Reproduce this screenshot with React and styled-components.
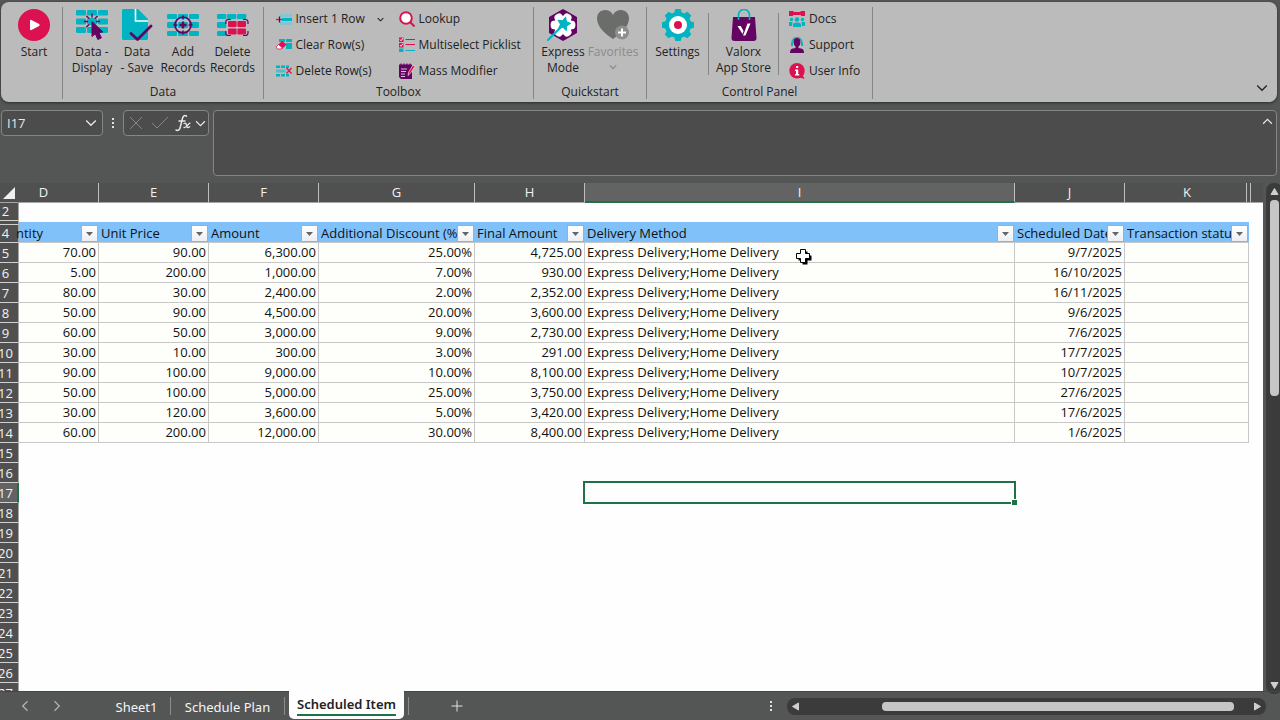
import React from "react";
import styled, { createGlobalStyle } from "styled-components";

const TEAL = "#00b4c3";
const RED = "#dc1150";
const PURPLE = "#640462";
const GREEN = "#1f7246";
const ui = `"Noto Sans", "Open Sans", sans-serif`;
const ribbonFont = `"Open Sans", "Noto Sans", sans-serif`;
const cellFont = `"Open Sans", "Noto Sans", sans-serif`;

const Global = createGlobalStyle`
  *, *::before, *::after { box-sizing: border-box; }
  body { margin: 0; background: #545656; font-family: ${ui}; }
  button, input, textarea { font: inherit; color: inherit; margin: 0; }
  button { border: 0; padding: 0; background: none; }
  svg { display: block; flex: none; }
`;

const Page = styled.div`
  display: flex;
  flex-direction: column;
  height: 100vh;
  overflow: hidden;
  padding-top: 2px;
  background: #545656;
`;

/* Ribbon */
const Ribbon = styled.header`
  display: flex;
  flex: none;
  position: relative;
  height: 100px;
  margin: 0 3px 0 1px;
  padding: 5px 0 3px;
  border-radius: 8px;
  background: #bbbbbb;
  box-shadow: 0 1px 3px #2c2c2c;
  color: #222222;
  font-family: ${ribbonFont};
  font-size: 12px;
  line-height: 16px;
`;
const Group = styled.section`
  display: flex;
  flex-direction: column;
  justify-content: space-between;
  width: ${(p) => p.$w}px;
  padding-left: ${(p) => p.$pad || 0}px;
  border-right: 1px solid #858585;
`;
const Tools = styled.div`
  display: flex;
  justify-content: ${(p) => (p.$start ? "flex-start" : "center")};
  height: 72px;
`;
const GroupName = styled.div`
  text-align: center;
  line-height: 14px;
`;
const BigButton = styled.button`
  display: flex;
  flex-direction: column;
  align-items: center;
  gap: 3px;
  width: ${(p) => p.$w}px;
  padding-top: 2px;
  white-space: nowrap;
  color: ${(p) => (p.$dim ? "#8c8c8c" : "inherit")};
`;
const Split = styled.div`
  width: 1px;
  height: 62px;
  margin-top: 6px;
  background: #858585;
`;
const SmallColumn = styled.div`
  display: flex;
  flex: none;
  flex-direction: column;
  width: ${(p) => p.$w}px;
  height: 78px;
  padding-left: ${(p) => p.$pad || 0}px;
  margin-top: -1px;
`;
const SmallButton = styled.button`
  display: flex;
  flex: none;
  align-items: center;
  gap: 4px;
  height: 26px;
  white-space: nowrap;
`;
const RowPair = styled.div`
  display: flex;
  align-items: center;
  justify-content: space-between;
  padding-right: 15px;
`;
const Collapse = styled.button`
  position: absolute;
  right: 9px;
  bottom: 8px;
`;

/* Formula bar */
const FormulaBar = styled.div`
  display: flex;
  flex: none;
  align-items: flex-start;
  height: 81px;
  padding: 8px 3px 0 1px;
  color: #e8e8e8;
`;
const Field = styled.div`
  display: flex;
  align-items: center;
  justify-content: space-between;
  width: ${(p) => p.$w}px;
  height: 26px;
  padding: 0 ${(p) => p.$pad}px;
  border: 1px solid #858585;
  border-radius: 4px;
  background: #4c4c4c;
`;
const NameInput = styled.input`
  width: 60px;
  padding: 0;
  border: 0;
  background: none;
  font-family: ${cellFont};
  font-size: 13px;
  outline: 0;
`;
const DotsBox = styled.div`
  display: grid;
  place-items: center;
  width: 20px;
  height: 26px;
`;
const FormulaBox = styled.div`
  display: flex;
  flex: 1;
  height: 66px;
  margin-left: 4px;
  padding: 5px 3px 0 8px;
  border: 1px solid #858585;
  border-radius: 4px;
  background: #4c4c4c;
`;
const FormulaInput = styled.textarea`
  flex: 1;
  height: 54px;
  border: 0;
  padding: 0;
  resize: none;
  background: none;
  outline: 0;
  font-size: 13px;
`;
const ChevronButton = styled.button`
  align-self: flex-start;
`;

/* Sheet */
const Body = styled.main`
  display: flex;
  flex: 1;
  min-height: 0;
`;
const Sheet = styled.div`
  position: relative;
  flex: 1;
  min-width: 0;
  overflow: hidden;
  background: #fefefe;
`;
const Grid = styled.table`
  width: 100%;
  table-layout: fixed;
  border-collapse: separate;
  border-spacing: 0;
  font-family: ${cellFont};
  font-size: 13px;
  line-height: 19px;
  color: #111111;
`;
const ColHead = styled.th`
  height: 20px;
  padding: 0;
  border-right: ${(p) => (p.$last ? "0" : "1px solid #bdbdbd")};
  border-bottom: ${(p) => (p.$on ? `2px solid ${GREEN}` : "1px solid #a6a6a6")};
  background: ${(p) => (p.$on ? "#636363" : "#505050")};
  color: #f2f2f2;
  font-size: 13px;
  font-weight: 400;
  line-height: 18px;
  vertical-align: top;
`;
const Corner = styled(ColHead)`
  border-right-color: #505050;
`;
const ScrolledLabel = styled.div`
  margin-left: -30px;
`;
const HiddenMark = styled.div`
  width: 5px;
  height: 19px;
  margin-left: -3px;
  border: solid #bdbdbd;
  border-width: 0 1px;
  background: #505050;
`;
const RowHead = styled.th`
  height: ${(p) => p.$h}px;
  padding: 0;
  overflow: hidden;
  border-right: ${(p) => (p.$on ? `2px solid ${GREEN}` : "1px solid #a6a6a6")};
  border-bottom: 1px solid #d0d0d0;
  background: ${(p) => (p.$on ? "#636363" : "#505050")};
  color: #f2f2f2;
  font-size: 13px;
  font-weight: 400;
  line-height: 17px;
  vertical-align: bottom;
`;
const RowNumber = styled.div`
  display: flex;
  justify-content: center;
  width: 27px;
  margin-left: -8px;
`;
const Cell = styled.td`
  position: relative;
  padding: 0 2px;
  white-space: nowrap;
  text-align: ${(p) => (p.$left ? "left" : "right")};
  border: solid #c8c8c8;
  border-width: ${(p) => (p.$line ? "0 1px 1px 0" : "0")};
  background: ${(p) => (p.$line ? "#fefffb" : "transparent")};
`;
const Band = styled.td`
  padding: 0;
  border-top: 1px solid #fefefe;
  background: #80c1fa;
`;
const HeadCell = styled.td`
  padding: 0;
  border-bottom: 1px solid #c8c8c8;
  background: #80c1fa;
`;
const HeadInner = styled.div`
  display: flex;
  align-items: center;
  height: 17px;
  padding: 0 1px 0 2px;
`;
const HeadText = styled.div`
  flex: 1;
  min-width: 0;
  overflow: hidden;
  white-space: nowrap;
  line-height: 17px;
  margin-left: ${(p) => (p.$cut ? "-5px" : "0")};
`;
const Filter = styled.button`
  display: grid;
  place-items: center;
  flex: none;
  width: 17px;
  height: 17px;
  border: 1px solid #a9adb3;
  background: linear-gradient(#ffffff, #eceff4);
`;
const Selection = styled.div`
  position: absolute;
  inset: -2px -1px -1px -2px;
  border: 2px solid ${GREEN};
`;
const Handle = styled.span`
  position: absolute;
  right: -4px;
  bottom: -4px;
  width: 7px;
  height: 7px;
  border: 1px solid #fefefe;
  background: ${GREEN};
`;
const Pointer = styled.div`
  position: absolute;
  left: 795px;
  top: 65px;
`;

/* Scroll bars */
const VScroll = styled.div`
  display: flex;
  flex-direction: column;
  align-items: center;
  justify-content: space-between;
  width: 17px;
  margin: 0 -3px -3px 3px;
  padding: 4px 0;
  border-radius: 8px;
  background: #3b3b3b;
`;
const VTrack = styled.div`
  flex: 1;
  width: 9px;
  padding: 4px 0;
`;
const VThumb = styled.div`
  height: 41%;
  border-radius: 4px;
  background: #c6c6c6;
`;
const HScroll = styled.div`
  display: flex;
  align-items: center;
  width: 479px;
  height: 17px;
  padding: 0 4px;
  border-radius: 8px;
  background: #3b3b3b;
`;
const HTrack = styled.div`
  display: flex;
  flex: 1;
  justify-content: flex-end;
  padding-right: 19px;
`;
const HThumb = styled.div`
  width: 81%;
  height: 9px;
  border-radius: 4px;
  background: #c6c6c6;
`;

/* Sheet tabs */
const TabBar = styled.footer`
  display: flex;
  flex: none;
  align-items: center;
  height: 29px;
  padding-right: 14px;
  border-top: 1px solid #444646;
  color: #f5f5f5;
  font-size: 13px;
`;
const TabNav = styled.div`
  display: flex;
  gap: 20px;
  width: 103px;
  padding-left: 19px;
`;
const Tab = styled.button`
  width: ${(p) => p.$w}px;
  height: 18px;
  line-height: 20px;
  border-right: 1px solid #8c8c8c;
  white-space: nowrap;
`;
const ActiveTab = styled.button`
  align-self: flex-start;
  height: 28px;
  margin: -1px 4px 0;
  padding: 3px 8px;
  width: 115px;
  border-radius: 0 0 5px 5px;
  background: #fefefe;
  color: #222222;
  font-weight: 600;
  white-space: nowrap;
`;
const Underline = styled.span`
  display: block;
  height: 22px;
  line-height: 20px;
  border-bottom: 2px solid ${GREEN};
`;
const AddTab = styled.button`
  display: grid;
  place-items: center;
  width: 97px;
  height: 18px;
  border-left: 1px solid #8c8c8c;
`;
const Spacer = styled.div`
  flex: 1;
`;
const BarDots = styled.div`
  width: 17px;
`;

const Chevron = ({ size = 12, dir = "down", color = "currentColor", w = 1.3 }) => {
  const turn = { down: 0, up: 180, left: 90, right: 270 }[dir];
  return (
    <svg width={size} height={size} viewBox="0 0 12 12" fill="none" stroke={color} strokeWidth={w}>
      <path transform={`rotate(${turn} 6 6)`} d="M1.2 3.5 6 8.3l4.8-4.8" />
    </svg>
  );
};
const Triangle = ({ d }) => (
  <svg width="9" height="9" viewBox="0 0 9 9" fill="#cfcfcf" stroke="#cfcfcf" strokeLinejoin="round">
    <path d={d} />
  </svg>
);
const Dots = () => (
  <svg width="3" height="12" viewBox="0 0 3 12" fill="#e0e0e0">
    <path d="M0 1h2v2H0zM0 5h2v2H0zM0 9h2v2H0z" />
  </svg>
);

const Bricks = ({ ys = [5, 13, 22], hs = [5, 6, 5], step = 11, w = 10 }) => (
  <g fill={TEAL}>
    {ys.map((y, r) =>
      [0, 1, 2].map((c) => <rect key={`${r}${c}`} x={c * step} y={y} width={w} height={hs[r]} rx="1.2" />)
    )}
  </g>
);
const Big = ({ children }) => (
  <svg width="32" height="32" viewBox="0 0 32 32" fill="none">{children}</svg>
);
const Small = ({ children }) => (
  <svg width="16" height="16" viewBox="0 0 16 16" fill="none">{children}</svg>
);

const icons = {
  start: (
    <Big>
      <circle cx="16" cy="16" r="16" fill={RED} />
      <path d="M13 11.8v8.4l7.6-4.2z" fill="#fff" stroke="#fff" strokeWidth="2" strokeLinejoin="round" />
    </Big>
  ),
  display: (
    <Big>
      <Bricks ys={[1, 9.5, 18]} hs={[5.5, 6, 6]} />
      <circle cx="16" cy="12.500" r="3.800" fill={TEAL} />
      <g stroke={PURPLE} strokeWidth="1.400" strokeLinecap="round">
        {[0, 45, 90, 225, 270, 315].map((a) => (
          <path key={a} transform={`rotate(${a} 16 12.5)`} d="M16 5v3" />
        ))}
      </g>
      <path d="M16 12.500v15l3.300-2.800 2.500 5.800 3.600-1.600-2.500-5.400 4-.5z" fill={PURPLE} stroke={PURPLE} strokeLinejoin="round" />
    </Big>
  ),
  save: (
    <Big>
      <path d="M2.500 0H17l10 10v19.500A1.500 1.500 0 0 1 25.500 31h-23A1.500 1.500 0 0 1 1 29.500v-28A1.500 1.500 0 0 1 2.500 0z" fill={TEAL} />
      <path d="M14.500 0v12H27" stroke="#fff" strokeWidth="1.600" />
      <path d="M10 24.500l6.500 6L30 17" stroke={PURPLE} strokeWidth="2.800" strokeLinecap="round" strokeLinejoin="round" />
    </Big>
  ),
  add: (
    <Big>
      <Bricks />
      <circle cx="16" cy="16" r="8" stroke={PURPLE} strokeWidth="1.700" />
      <path d="M16 6.500v4M16 21.500v4M6.500 16h4M21.500 16h4" stroke={PURPLE} strokeWidth="1.600" />
      <path d="M16 12.500v7M12.500 16h7" stroke={PURPLE} strokeWidth="2.400" />
    </Big>
  ),
  del: (
    <Big>
      <Bricks step={10} w={9.3} />
      <path d="M10 12h22v16H10z" fill="#bbb" />
      <g fill={RED}>
        <rect x="11" y="12" width="8.600" height="6" rx="1.200" />
        <rect x="20.400" y="12" width="8.600" height="6" rx="1.200" />
        <rect x="11" y="19.500" width="8.600" height="6" rx="1.200" />
        <rect x="20.400" y="19.500" width="8.600" height="6" rx="1.200" />
      </g>
      <path d="M8.800 15v-2a2.500 2.500 0 0 1 2.500-2.500h2.500M26 10.500h2.500a2.500 2.500 0 0 1 2.500 2.500v2M31 22v2a2.500 2.500 0 0 1-2.500 2.500H26M13.800 26.500h-2.500a2.500 2.500 0 0 1-2.500-2.500v-2" stroke={PURPLE} strokeWidth="1.200" />
    </Big>
  ),
  express: (
    <Big>
      <path d="M16 1 29 8.500v15L16 31 3 23.500v-15z" fill={PURPLE} stroke={PURPLE} strokeWidth="2" strokeLinejoin="round" />
      <g fill="#fff">
        <circle cx="16" cy="16" r="9.500" />
        {[30, 90, 150, 210, 270, 330].map((a) => (
          <ellipse key={a} transform={`rotate(${a} 16 16)`} cx="16" cy="6.800" rx="4.200" ry="3.200" />
        ))}
      </g>
      <path d="M13 19 1 31" stroke={TEAL} strokeWidth="2" strokeLinecap="round" />
      <path transform="rotate(14 17 14.500)" d="m17 8 2 4.200 4.500.6-3.300 3.200.8 4.600-4-2.200-4 2.200.8-4.600-3.300-3.200 4.500-.6z" fill={TEAL} stroke={TEAL} strokeLinejoin="round" />
    </Big>
  ),
  heart: (
    <Big>
      <path d="M16 30C10 26 0 18.500 0 9.500 0 4.500 3.500 1 8 1c3.500 0 6.500 1.700 8 5 1.500-3.300 4.500-5 8-5 4.500 0 8 3.500 8 8.500C32 18.500 22 26 16 30z" fill="#6b6d6b" />
      <circle cx="25" cy="23.500" r="7" fill="#8d8f8d" />
      <path d="M25 19.500v8M21 23.500h8" stroke="#fff" strokeWidth="2" />
    </Big>
  ),
  gear: (
    <Big>
      <g fill={TEAL}>
        <circle cx="16" cy="16" r="13" />
        {[0, 45, 90, 135, 180, 225, 270, 315].map((a) => (
          <path key={a} transform={`rotate(${a} 16 16)`} d="M12 4.500 13.300 0h5.400L20 4.500z" />
        ))}
      </g>
      <circle cx="16" cy="16" r="9" fill="#fff" />
      <circle cx="16" cy="16" r="4" fill={RED} />
    </Big>
  ),
  bag: (
    <Big>
      <path d="M5 8h22l1.500 21a3 3 0 0 1-3 3h-19a3 3 0 0 1-3-3z" fill={PURPLE} />
      <path d="M10.500 11V6a5.500 5.500 0 0 1 11 0v5" stroke={TEAL} strokeWidth="1.600" />
      <path d="M9.500 17h3.200l2.800 5-1 3zM17 21.500l2.500-7h3L17.500 26.500H15z" fill="#fff" />
    </Big>
  ),
  insert: (
    <Small>
      <path d="M4 3h3.500v3H4zM8.300 3h3.500v3H8.300zM12.500 3H16v3h-3.500zM4 11h3.500v3H4zM8.300 11h3.500v3H8.300zM12.500 11H16v3h-3.500z" fill="#7fc6d2" />
      <path d="M6 7h10v3H6z" fill={TEAL} />
      <path d="M0 8.500h6" stroke={RED} strokeWidth="1.300" />
      <path d="M3.500 5.500v6" stroke={PURPLE} strokeWidth="1.300" />
    </Small>
  ),
  clear: (
    <Small>
      <path d="M3 2h6v3H3zM10 2h6v3h-6zM10 6h6v6h-6z" fill={TEAL} />
      <path d="m1 9 5-5 4.500 3.500L6 12H3z" fill={RED} />
      <path d="m0 10 2.500-2.500 4 3.500L5 12H1.500z" fill="#fff" stroke={RED} strokeWidth=".8" />
    </Small>
  ),
  delRow: (
    <Small>
      <path d="M0 2.500h4V5H0zM5 2.500h4V5H5zM10 2.500h3V5h-3zM0 11h4v2.500H0zM5 11h4v2.500H5zM10 11h3v2.500h-3z" fill={TEAL} />
      <path d="M0 6.500h9.500v3H0z" fill="#4dbecb" />
      <path d="m10.500 5 5 5.500M15.500 5l-5 5.500" stroke={RED} strokeWidth="1.200" />
    </Small>
  ),
  lookup: (
    <Small>
      <circle cx="7" cy="7" r="5.800" fill="#fff" stroke={RED} strokeWidth="2" />
      <path d="m11 11 4.500 4.500" stroke={RED} strokeWidth="2" />
    </Small>
  ),
  pick: (
    <Small>
      <path d="M0 .500h4.500V5H0zM0 6h4.500v4.500H0z" fill={RED} />
      <path d="m1 2.500 1 1.300L4 1M1 8l1 1.300L4 6.500" stroke="#fff" strokeWidth=".9" />
      <path d="M6.500 2.500H16M6.500 7.500H16" stroke={RED} />
      <path d="M0 11.500h4.500V15H0z" fill={TEAL} />
      <path d="M6.500 13.500H16" stroke={TEAL} />
    </Small>
  ),
  mass: (
    <Small>
      <path d="M0 1.500h13V16H2l-2-2z" fill={PURPLE} />
      <path d="M2 .5v2M5 .5v2M8 .5v2M11 .5v2" stroke={PURPLE} strokeWidth="1.200" />
      <path d="M2 6h6M2 8.500h5M2 11h4M2 13.500h4" stroke="#ddd" strokeWidth=".9" />
      <path d="m9 12.500.7-3.500L14 2l2 1.200-4.500 7z" fill={RED} stroke="#fff" strokeWidth=".6" />
    </Small>
  ),
  docs: (
    <Small>
      <path d="M0 0h4.500v1h7V0H16v5h-4V4H4v1H0z" fill={RED} />
      <circle cx="8" cy="8.500" r="2.200" fill={TEAL} />
      <circle cx="2.500" cy="8.500" r="1.700" fill={TEAL} />
      <circle cx="13.500" cy="8.500" r="1.700" fill={TEAL} />
      <path d="M4 16v-2.500q0-2 4-2t4 2V16zM0 15v-4h3.500L3 15zM16 15v-4h-3.500l.5 4z" fill={TEAL} />
    </Small>
  ),
  support: (
    <Small>
      <path d="M3 8V5.500a5 5 0 0 1 10 0V8" stroke={TEAL} strokeWidth="1.200" />
      <path d="M2 5.500h2v3.500H2zM12 5.500h2v3.500h-2z" fill={TEAL} />
      <path d="M4.500 5a3.500 4 0 0 1 7 0q0 3-2 4.500v1.500l3.500.800q2 .7 2 4.200H1q0-3.500 2-4.200l3.500-.8V9.500q-2-1.500-2-4.500z" fill={PURPLE} />
    </Small>
  ),
  info: (
    <Small>
      <circle cx="8" cy="7.700" r="7.700" fill={RED} />
      <path d="m9 14 6.500 2-2-4.500z" fill={RED} />
      <path d="M7 3h2.200v2H7zM6 6.500h3.200V11h1v1.500H6V11h1V8H6z" fill="#fff" />
    </Small>
  ),
};

const LargeTool = ({ icon, lines, w, dim, drop }) => (
  <BigButton $w={w} $dim={dim}>
    {icons[icon]}
    <span>
      {lines[0]}
      {lines[1] && <br />}
      {lines[1]}
    </span>
    {drop && <Chevron size={8} w={1.8} />}
  </BigButton>
);
const SmallTool = ({ icon, text }) => (
  <SmallButton>
    {icons[icon]}
    {text}
  </SmallButton>
);

const columns = [
  ["D", 80], ["E", 110], ["F", 110], ["G", 156], ["H", 110], ["I", 430], ["J", 110], ["K", 124],
];
const titles = [
  "ntity", "Unit Price", "Amount", "Additional Discount (%)", "Final Amount",
  "Delivery Method", "Scheduled Date", "Transaction status",
];
const METHOD = "Express Delivery;Home Delivery";
const records = [
  ["70.00", "90.00", "6,300.00", "25.00%", "4,725.00", METHOD, "9/7/2025", ""],
  ["5.00", "200.00", "1,000.00", "7.00%", "930.00", METHOD, "16/10/2025", ""],
  ["80.00", "30.00", "2,400.00", "2.00%", "2,352.00", METHOD, "16/11/2025", ""],
  ["50.00", "90.00", "4,500.00", "20.00%", "3,600.00", METHOD, "9/6/2025", ""],
  ["60.00", "50.00", "3,000.00", "9.00%", "2,730.00", METHOD, "7/6/2025", ""],
  ["30.00", "10.00", "300.00", "3.00%", "291.00", METHOD, "17/7/2025", ""],
  ["90.00", "100.00", "9,000.00", "10.00%", "8,100.00", METHOD, "10/7/2025", ""],
  ["50.00", "100.00", "5,000.00", "25.00%", "3,750.00", METHOD, "27/6/2025", ""],
  ["30.00", "120.00", "3,600.00", "5.00%", "3,420.00", METHOD, "17/6/2025", ""],
  ["60.00", "200.00", "12,000.00", "30.00%", "8,400.00", METHOD, "1/6/2025", ""],
];
const emptyRows = Array.from({ length: 13 }, (_, i) => i + 15);

const SheetGrid = () => (
  <Grid>
    <colgroup>
      <col width="19" />
      {columns.map(([name, w]) => <col key={name} width={w} />)}
      <col />
    </colgroup>
    <thead>
      <tr>
        <Corner aria-label="Select all">
          <svg width="18" height="18" viewBox="0 0 18 18"><path d="M15 4v12H3z" fill="#f0f0f0" /></svg>
        </Corner>
        {columns.map(([name]) => (
          <ColHead key={name} $on={name === "I"} $last={name === "K"}>
            {name === "D" ? <ScrolledLabel>{name}</ScrolledLabel> : name}
          </ColHead>
        ))}
        <ColHead $last><HiddenMark /></ColHead>
      </tr>
    </thead>
    <tbody>
      <tr>
        <RowHead $h={18}><RowNumber>2</RowNumber></RowHead>
        <td colSpan={9} />
      </tr>
      <tr>
        <RowHead $h={4} />
        <Band colSpan={8} />
        <td />
      </tr>
      <tr>
        <RowHead $h={18}><RowNumber>4</RowNumber></RowHead>
        {titles.map((t, i) => (
          <HeadCell key={t}>
            <HeadInner>
              <HeadText $cut={i === 0}>{t}</HeadText>
              <Filter aria-label={`Filter column ${columns[i][0]}`}>
                <svg width="7" height="4" viewBox="0 0 7 4"><path d="M0 0h7L3.500 4z" fill="#62666b" /></svg>
              </Filter>
            </HeadInner>
          </HeadCell>
        ))}
        <td />
      </tr>
      {records.map((r, n) => (
        <tr key={n}>
          <RowHead $h={20}><RowNumber>{n + 5}</RowNumber></RowHead>
          {r.map((v, i) => <Cell key={i} $line $left={i === 5}>{v}</Cell>)}
          <td />
        </tr>
      ))}
      {emptyRows.map((n) => (
        <tr key={n}>
          <RowHead $h={20} $on={n === 17}><RowNumber>{n}</RowNumber></RowHead>
          {n === 17 ? (
            <>
              <td colSpan={5} />
              <Cell><Selection><Handle /></Selection></Cell>
              <td colSpan={3} />
            </>
          ) : (
            <td colSpan={9} />
          )}
        </tr>
      ))}
    </tbody>
  </Grid>
);

export default function App() {
  return (
    <Page>
      <Global />
      <Ribbon>
        <Group $w={62} $pad={5}>
          <Tools>
            <LargeTool icon="start" lines={["Start"]} w={54} />
          </Tools>
        </Group>
        <Group $w={201}>
          <Tools>
            <LargeTool icon="display" lines={["Data -", "Display"]} w={47} />
            <LargeTool icon="save" lines={["Data", "- Save"]} w={43} />
            <LargeTool icon="add" lines={["Add", "Records"]} w={49} />
            <LargeTool icon="del" lines={["Delete", "Records"]} w={50} />
          </Tools>
          <GroupName>Data</GroupName>
        </Group>
        <Group $w={270}>
          <Tools>
            <SmallColumn $w={123}>
              <RowPair>
                <SmallTool icon="insert" text="Insert 1 Row" />
                <button aria-label="Insert options"><Chevron size={7} w={1.8} /></button>
              </RowPair>
              <SmallTool icon="clear" text="Clear Row(s)" />
              <SmallTool icon="delRow" text="Delete Row(s)" />
            </SmallColumn>
            <SmallColumn $w={123}>
              <SmallTool icon="lookup" text="Lookup" />
              <SmallTool icon="pick" text="Multiselect Picklist" />
              <SmallTool icon="mass" text="Mass Modifier" />
            </SmallColumn>
          </Tools>
          <GroupName>Toolbox</GroupName>
        </Group>
        <Group $w={113}>
          <Tools $start>
            <LargeTool icon="express" lines={["Express", "Mode"]} w={58} />
            <LargeTool icon="heart" lines={["Favorites"]} w={42} dim drop />
          </Tools>
          <GroupName>Quickstart</GroupName>
        </Group>
        <Group $w={226}>
          <Tools>
            <LargeTool icon="gear" lines={["Settings"]} w={61} />
            <Split />
            <LargeTool icon="bag" lines={["Valorx", "App Store"]} w={69} />
            <Split />
            <SmallColumn $w={93} $pad={10}>
              <SmallTool icon="docs" text="Docs" />
              <SmallTool icon="support" text="Support" />
              <SmallTool icon="info" text="User Info" />
            </SmallColumn>
          </Tools>
          <GroupName>Control Panel</GroupName>
        </Group>
        <Collapse aria-label="Collapse ribbon"><Chevron /></Collapse>
      </Ribbon>

      <FormulaBar>
        <Field $w={102} $pad={5}>
          <NameInput aria-label="Name box" defaultValue="I17" />
          <button aria-label="Name list"><Chevron /></button>
        </Field>
        <DotsBox><Dots /></DotsBox>
        <Field $w={86} $pad={2}>
          <button aria-label="Cancel">
            <svg width="20" height="16" viewBox="0 0 20 16" stroke="#858585" fill="none"><path d="m4 2 12 12M16 2 4 14" /></svg>
          </button>
          <button aria-label="Enter">
            <svg width="20" height="16" viewBox="0 0 20 16" stroke="#858585" fill="none"><path d="m2 8 5 5L18 2" /></svg>
          </button>
          <button aria-label="Insert function">
            <svg width="16" height="18" viewBox="0 0 16 18" stroke="#e8e8e8" fill="none" strokeLinecap="round">
              <path d="M11.500 2.200C9.500.800 8 2 7.300 5L5.200 13.500C4.600 16 3 17 1 16M4 7h6" strokeWidth="1.500" />
              <path d="M9 9.500c2-1 2 0 2.700 2.500.5 2 1.300 2 3 .8M15 9.200c-2 0-2.500 4.800-6 4.300" strokeWidth="1.300" />
            </svg>
          </button>
          <button aria-label="Functions"><Chevron size={11} /></button>
        </Field>
        <FormulaBox>
          <FormulaInput aria-label="Formula" />
          <ChevronButton aria-label="Collapse formula bar"><Chevron size={11} dir="up" /></ChevronButton>
        </FormulaBox>
      </FormulaBar>

      <Body>
        <Sheet>
          <SheetGrid />
          <Pointer>
            <svg width="18" height="18" viewBox="0 0 18 18">
              <path d="M6.500 2.500h5v4h4v5h-4v4h-5v-4h-4v-5h4z" fill="#000" transform="translate(1 1)" />
              <path d="M5.500 1.500h5v4h4v5h-4v4h-5v-4h-4v-5h4z" fill="#fff" stroke="#000" />
            </svg>
          </Pointer>
        </Sheet>
        <VScroll>
          <button aria-label="Scroll up"><Triangle d="M4.500 1.500 8 7.500H1z" /></button>
          <VTrack><VThumb /></VTrack>
          <button aria-label="Scroll down"><Triangle d="M4.500 7.500 8 1.500H1z" /></button>
        </VScroll>
      </Body>

      <TabBar>
        <TabNav>
          <button aria-label="Previous sheet"><Chevron dir="left" color="#b0b0b0" /></button>
          <button aria-label="Next sheet"><Chevron dir="right" color="#b0b0b0" /></button>
        </TabNav>
        <Tab $w={68}>Sheet1</Tab>
        <Tab $w={114}>Schedule Plan</Tab>
        <ActiveTab><Underline>Scheduled Item</Underline></ActiveTab>
        <AddTab aria-label="New sheet">
          <svg width="12" height="12" viewBox="0 0 12 12" stroke="#e0e0e0"><path d="M6 .5v11M.500 6h11" /></svg>
        </AddTab>
        <Spacer />
        <BarDots><Dots /></BarDots>
        <HScroll>
          <button aria-label="Scroll left"><Triangle d="M1.500 4.500 7.500 1v7z" /></button>
          <HTrack><HThumb /></HTrack>
          <button aria-label="Scroll right"><Triangle d="M7.500 4.500 1.500 1v7z" /></button>
        </HScroll>
      </TabBar>
    </Page>
  );
}
